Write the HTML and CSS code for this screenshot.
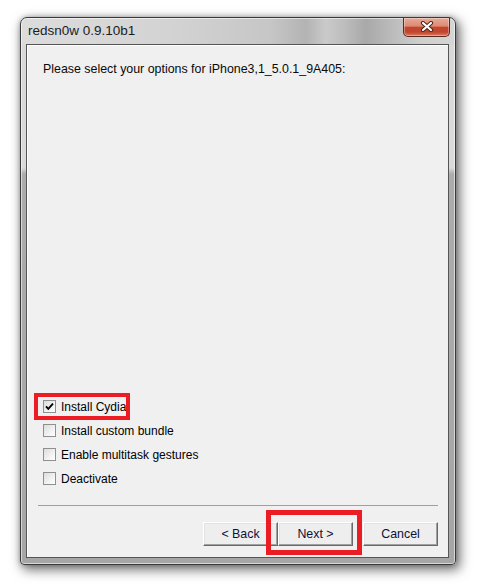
FILE: index.html
```html
<html>
  <head>
    <title>redsn0w 0.9.10b1</title>
    <link rel="stylesheet" href="styles.css">
  </head>
  <body>
    <div class="window">
      <div class="titlebar">
        <span class="title">redsn0w 0.9.10b1</span>
        <button class="close">
          <svg width="14" height="11" viewBox="0 0 14 11">
            <path d="M3 2 L11 9 M11 2 L3 9" stroke="#4a2418" stroke-width="4.2" stroke-linecap="round" fill="none"/>
            <path d="M3 2 L11 9 M11 2 L3 9" stroke="#ffffff" stroke-width="2.2" stroke-linecap="round" fill="none"/>
          </svg>
        </button>
      </div>

      <div class="client">
        <p class="prompt">Please select your options for iPhone3,1_5.0.1_9A405:</p>

        <ul class="options">
          <li class="option">
            <span class="box">
              <svg width="11" height="11" viewBox="0 0 11 11">
                <path d="M2 5.3 L4.3 7.8 L9 2.6" stroke="#000" stroke-width="1.9" fill="none"/>
              </svg>
            </span>Install Cydia
          </li>
          <li class="option"><span class="box"></span>Install custom bundle</li>
          <li class="option"><span class="box"></span>Enable multitask gestures</li>
          <li class="option"><span class="box"></span>Deactivate</li>
        </ul>

        <div class="sep"></div>

        <div class="buttons">
          <button class="btn">&lt; Back</button>
          <button class="btn">Next &gt;</button>
          <button class="btn cancel">Cancel</button>
        </div>
      </div>
    </div>

    <!-- red annotation boxes drawn over the screenshot -->
    <div class="mark mark-cydia"></div>
    <div class="mark mark-next"></div>
  </body>
</html>
```

FILE: styles.css
```css
html, body { margin: 0; padding: 0; }

body { background-color: #FFFFFF; width: 480px; height: 585px; overflow: hidden;
       font-family: "Liberation Sans", Arial, sans-serif; font-size: 12px; color: #000000; }

.window { box-sizing: border-box;
          margin: 17px 0 0 20px; width: 436px; height: 548px;
          padding: 0 6px 6px 5px;
          display: flex; flex-direction: column;
          border: 1px solid #3a3a3a; border-radius: 7px 7px 4px 4px;
          background:
            linear-gradient(90deg, #dcdcdc 0px, #d3d3d3 150px, #c6c6c6 250px, #b3b3b3 285px,
                            #cacaca 305px, #bebebe 322px, #a9a9a9 345px, #bcbcbc 372px,
                            #cfcfcf 400px, #d6d6d6 436px) 0 0 / 100% 27px no-repeat,
            linear-gradient(180deg, #d8d8d8 0px, #dadada 150px, #acacac 156px, #a6a6a6 100%);
          box-shadow: inset 0 0 0 1px rgba(255,255,255,0.55),
                      3px 4px 12px 1px rgba(0,0,0,0.55),
                      0 0 5px rgba(0,0,0,0.25); }

.titlebar { height: 26px; display: flex; justify-content: space-between; align-items: flex-start;
            padding-left: 2px; }

.title { margin-top: 5px; font-size: 13.5px; line-height: 16px; color: #1c1c1c; }

.close { box-sizing: border-box; width: 47px; height: 19px; margin: 0 -1px 0 0; padding: 0 0 1px 0;
         display: flex; align-items: center; justify-content: center;
         border: 1px solid #5a2a1e; border-top: none; border-radius: 0 0 5px 5px;
         background: linear-gradient(180deg, #e9aa98 0%, #dc8a74 45%, #c4452d 52%,
                                     #c0462f 78%, #dc7a5c 100%);
         box-shadow: inset 0 0 0 1px rgba(255,255,255,0.35); }

.client { flex: 1; display: flex; flex-direction: column;
          border: 1px solid #555555; background-color: #F0F0F0;
          box-shadow: inset 1px 1px 0 #ffffff; }

.prompt { margin: 17px 0 0 16px; font-size: 12.4px; line-height: 14px; color: #0a0a0a; }

.options { list-style: none; margin: auto 0 0 0; padding: 0 0 0 16px; }

.option { height: 24px; display: flex; align-items: center; line-height: 14px; padding-top: 1px;
          box-sizing: border-box; }

.box { box-sizing: border-box; width: 13px; height: 13px; margin-right: 5px;
       display: flex; align-items: center; justify-content: center;
       border: 1px solid #8e8f8f;
       background: linear-gradient(135deg, #dcdcdc 0%, #f2f2f2 60%, #ffffff 100%); }

.sep { height: 0; margin: 15px 10px 0 11px; border-top: 1px solid #a0a0a0; }

.buttons { display: flex; justify-content: flex-end; margin-top: 16px;
           padding: 0 10px 11px 0; }

.btn { box-sizing: border-box; width: 75px; height: 24px; padding: 0;
       font-family: "Liberation Sans", Arial, sans-serif; font-size: 12.4px; color: #10103a;
       background-color: #EEEEEE;
       border: 1px solid; border-color: #ffffff #696969 #696969 #ffffff;
       box-shadow: inset -1px -1px 0 #a0a0a0, inset 1px 1px 0 #e3e3e3; }

.cancel { margin-left: 10px; }

.mark { position: absolute; box-sizing: border-box; border: 4px solid #EC1C24; }

.mark-cydia { left: 34px; top: 393px; width: 96px; height: 27px; }
.mark-next  { left: 266px; top: 510px; width: 96px; height: 45px; border-width: 5px; }
```
